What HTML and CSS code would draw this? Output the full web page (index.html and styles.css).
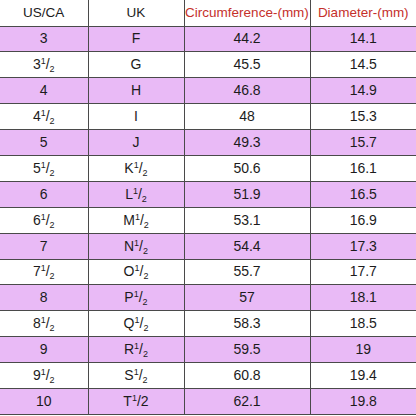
FILE: index.html
```html
<!DOCTYPE html>
<html lang="en">

<head>
  <meta charset="UTF-8">
  <meta name="viewport" content="width=device-width, initial-scale=1.0">
  <title>Ring Size Chart</title>
  <link rel="stylesheet" href="styles.css">
</head>

<body>
  <table class="size-chart">
    <colgroup>
      <col class="col-us">
      <col class="col-uk">
      <col class="col-circ">
      <col class="col-dia">
    </colgroup>
    <thead>
      <tr>
        <th>US/CA</th>
        <th>UK</th>
        <th class="red">Circumference-(mm)</th>
        <th class="red">Diameter-(mm)</th>
      </tr>
    </thead>
    <tbody>
      <tr class="tint"><td>3</td><td>F</td><td>44.2</td><td>14.1</td></tr>
      <tr><td>3<sup>1</sup>/<sub>2</sub></td><td>G</td><td>45.5</td><td>14.5</td></tr>
      <tr class="tint"><td>4</td><td>H</td><td>46.8</td><td>14.9</td></tr>
      <tr><td>4<sup>1</sup>/<sub>2</sub></td><td>I</td><td>48</td><td>15.3</td></tr>
      <tr class="tint"><td>5</td><td>J</td><td>49.3</td><td>15.7</td></tr>
      <tr><td>5<sup>1</sup>/<sub>2</sub></td><td>K<sup>1</sup>/<sub>2</sub></td><td>50.6</td><td>16.1</td></tr>
      <tr class="tint"><td>6</td><td>L<sup>1</sup>/<sub>2</sub></td><td>51.9</td><td>16.5</td></tr>
      <tr><td>6<sup>1</sup>/<sub>2</sub></td><td>M<sup>1</sup>/<sub>2</sub></td><td>53.1</td><td>16.9</td></tr>
      <tr class="tint"><td>7</td><td>N<sup>1</sup>/<sub>2</sub></td><td>54.4</td><td>17.3</td></tr>
      <tr><td>7<sup>1</sup>/<sub>2</sub></td><td>O<sup>1</sup>/<sub>2</sub></td><td>55.7</td><td>17.7</td></tr>
      <tr class="tint"><td>8</td><td>P<sup>1</sup>/<sub>2</sub></td><td>57</td><td>18.1</td></tr>
      <tr><td>8<sup>1</sup>/<sub>2</sub></td><td>Q<sup>1</sup>/<sub>2</sub></td><td>58.3</td><td>18.5</td></tr>
      <tr class="tint"><td>9</td><td>R<sup>1</sup>/<sub>2</sub></td><td>59.5</td><td>19</td></tr>
      <tr><td>9<sup>1</sup>/<sub>2</sub></td><td>S<sup>1</sup>/<sub>2</sub></td><td>60.8</td><td>19.4</td></tr>
      <tr class="tint"><td>10</td><td>T<sup>1</sup>/2</td><td>62.1</td><td>19.8</td></tr>
    </tbody>
  </table>
</body>

</html>
```

FILE: styles.css
```css
* {
  margin: 0;
  padding: 0;
  box-sizing: border-box;
}

body {
  font-family: "Liberation Sans", Arial, sans-serif;
  background: #fff;
  color: #1c1c1c;
}

.size-chart {
  width: 416px;
  table-layout: fixed;
  border-collapse: collapse;
  font-size: 14px;
}

.col-us {
  width: 88px;
}

.col-uk {
  width: 96px;
}

.col-circ {
  width: 126px;
}

.col-dia {
  width: 106px;
}

.size-chart th,
.size-chart td {
  text-align: center;
  font-weight: normal;
  border: 1px solid #4a4a4a;
  line-height: 15px;
  padding: 0;
}

.size-chart th {
  height: 26px;
  font-size: 13.5px;
  border-top: none;
}

.size-chart td {
  height: 25.9px;
}

.size-chart tr > :first-child {
  border-left: none;
}

.size-chart tr > :last-child {
  border-right: none;
}

.size-chart .red {
  color: #c5302b;
}

.tint {
  background: #e9baf6;
}

sup,
sub {
  font-size: 9px;
  line-height: 0;
  position: relative;
  vertical-align: baseline;
}

sup {
  top: -5px;
}

sub {
  top: 3px;
}
```
